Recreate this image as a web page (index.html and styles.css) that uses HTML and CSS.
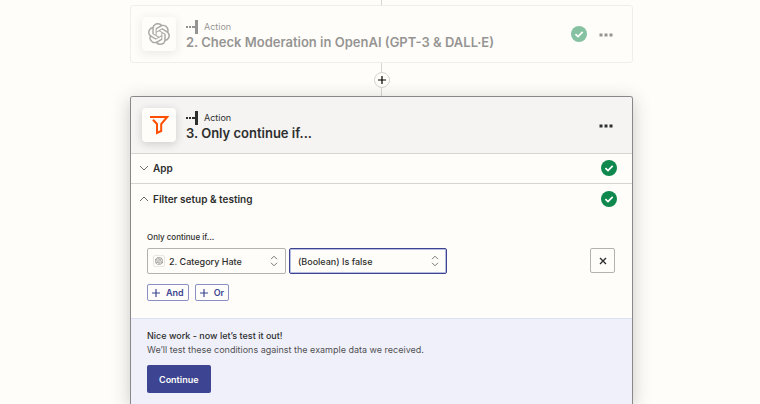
FILE: index.html
```html
<!DOCTYPE html>
<html lang="en">
<head>
    <meta charset="utf-8">
    <title>Workflow editor</title>
    <meta name="viewport" content="width=device-width, initial-scale=1">
    <link rel="stylesheet" href="styles.css">
</head>
<body>
    <!-- shared icons -->
    <svg class="sprite" aria-hidden="true">
        <symbol id="icon-openai" viewBox="0 0 24 24">
            <path fill="currentColor" d="M22.2819 9.8211a5.9847 5.9847 0 0 0-.5157-4.9108 6.0462 6.0462 0 0 0-6.5098-2.9A6.0651 6.0651 0 0 0 4.9807 4.1818a5.9847 5.9847 0 0 0-3.9977 2.9 6.0462 6.0462 0 0 0 .7427 7.0966 5.98 5.98 0 0 0 .511 4.9107 6.051 6.051 0 0 0 6.5146 2.9001A5.9847 5.9847 0 0 0 13.2599 24a6.0557 6.0557 0 0 0 5.7718-4.2058 5.9894 5.9894 0 0 0 3.9977-2.9001 6.0557 6.0557 0 0 0-.7475-7.0729zm-9.022 12.6081a4.4755 4.4755 0 0 1-2.8764-1.0408l.1419-.0804 4.7783-2.7582a.7948.7948 0 0 0 .3927-.6813v-6.7369l2.02 1.1686a.071.071 0 0 1 .038.052v5.5826a4.504 4.504 0 0 1-4.4945 4.4944zm-9.6607-4.1254a4.4708 4.4708 0 0 1-.5346-3.0137l.142.0852 4.783 2.7582a.7712.7712 0 0 0 .7806 0l5.8428-3.3685v2.3324a.0804.0804 0 0 1-.0332.0615L9.74 19.9502a4.4992 4.4992 0 0 1-6.1408-1.6464zM2.3408 7.8956a4.485 4.485 0 0 1 2.3655-1.9728V11.6a.7664.7664 0 0 0 .3879.6765l5.8144 3.3543-2.0201 1.1685a.0757.0757 0 0 1-.071 0l-4.8303-2.7865A4.504 4.504 0 0 1 2.3408 7.872zm16.5963 3.8558L13.1038 8.364 15.1192 7.2a.0757.0757 0 0 1 .071 0l4.8303 2.7913a4.4944 4.4944 0 0 1-.6765 8.1042v-5.6772a.79.79 0 0 0-.407-.667zm2.0107-3.0231l-.142-.0852-4.7735-2.7818a.7759.7759 0 0 0-.7854 0L9.409 9.2297V6.8974a.0662.0662 0 0 1 .0284-.0615l4.8303-2.7866a4.4992 4.4992 0 0 1 6.6802 4.66zM8.3065 12.863l-2.02-1.1638a.0804.0804 0 0 1-.038-.0567V6.0742a4.4992 4.4992 0 0 1 7.3757-3.4537l-.142.0805L8.704 5.459a.7948.7948 0 0 0-.3927.6813zm1.0976-2.3654l2.602-1.4998 2.6069 1.4998v2.9994l-2.5974 1.4997-2.6067-1.4997Z"/>
        </symbol>
        <symbol id="icon-action" viewBox="0 0 12 14">
            <path fill="currentColor" d="M0 6h2v2H0zM3 6h2v2H3zM6 6h4v2H6zM9 0h3v14H9z"/>
        </symbol>
        <symbol id="icon-check" viewBox="0 0 16 16">
            <circle cx="8" cy="8" r="8" fill="#0f884e"/>
            <path fill="none" stroke="#fff" stroke-width="1.7" d="M4.4 8.1 7 10.6l4.7-4.8"/>
        </symbol>
        <symbol id="icon-more" viewBox="0 0 14 4">
            <path fill="currentColor" d="M.5.5h3v3h-3zM5.5.5h3v3h-3zM10.5.5h3v3h-3z"/>
        </symbol>
        <symbol id="icon-sort" viewBox="0 0 8 12">
            <path fill="none" stroke="currentColor" d="M1 4.2 4 1.2l3 3M1 7.8l3 3 3-3"/>
        </symbol>
        <symbol id="icon-plus" viewBox="0 0 8 8">
            <path fill="none" stroke="currentColor" stroke-width="1.2" d="M4 0v8M0 4h8"/>
        </symbol>
    </svg>

    <main class="workflow">
        <div class="connector connector-top"></div>

        <section class="step step-faded">
            <header class="step-header">
                <span class="app-icon"><svg class="openai-logo"><use href="#icon-openai"/></svg></span>
                <div class="step-name">
                    <p class="step-type"><svg class="action-icon"><use href="#icon-action"/></svg>Action</p>
                    <h2 class="step-title">2. Check Moderation in OpenAI (GPT-3 &amp; DALL·E)</h2>
                </div>
                <svg class="check"><use href="#icon-check"/></svg>
                <button class="more" type="button" aria-label="More"><svg class="more-icon"><use href="#icon-more"/></svg></button>
            </header>
        </section>

        <div class="connector">
            <button class="add-step" type="button" aria-label="Add step"><svg class="plus-icon"><use href="#icon-plus"/></svg></button>
        </div>

        <section class="step step-open">
            <header class="step-header">
                <span class="app-icon">
                    <svg class="filter-logo" viewBox="0 0 20 20">
                        <path fill="none" stroke="#ff4f00" stroke-width="2" d="M1 2h17.2L12.200 9v7L8 18V9L4 4.800"/>
                    </svg>
                </span>
                <div class="step-name">
                    <p class="step-type"><svg class="action-icon"><use href="#icon-action"/></svg>Action</p>
                    <h2 class="step-title">3. Only continue if...</h2>
                </div>
                <button class="more" type="button" aria-label="More"><svg class="more-icon"><use href="#icon-more"/></svg></button>
            </header>

            <button class="section-row" type="button">
                <svg class="chevron" viewBox="0 0 10 6"><path d="M1 1l4 4 4-4"/></svg>
                <span class="section-name">App</span>
                <svg class="check"><use href="#icon-check"/></svg>
            </button>
            <button class="section-row" type="button">
                <svg class="chevron" viewBox="0 0 10 6"><path d="M1 5l4-4 4 4"/></svg>
                <span class="section-name">Filter setup &amp; testing</span>
                <svg class="check"><use href="#icon-check"/></svg>
            </button>

            <div class="rules">
                <label class="rules-label" for="field">Only continue if...</label>
                <div class="rule">
                    <div class="dropdown dropdown-field">
                        <span class="field-icon"><svg class="field-logo"><use href="#icon-openai"/></svg></span>
                        <select class="dropdown-select" id="field">
                            <option>2. Category Hate</option>
                        </select>
                        <svg class="sort-icon"><use href="#icon-sort"/></svg>
                    </div>
                    <div class="dropdown dropdown-active">
                        <select class="dropdown-select" id="condition" aria-label="Condition">
                            <option>(Boolean) Is false</option>
                        </select>
                        <svg class="sort-icon"><use href="#icon-sort"/></svg>
                    </div>
                    <button class="remove" type="button" aria-label="Remove">
                        <svg class="remove-icon" viewBox="0 0 8 8"><path d="M1 1l6 6M7 1L1 7"/></svg>
                    </button>
                </div>
                <div class="rule-buttons">
                    <button class="add-rule" type="button"><svg class="plus-icon"><use href="#icon-plus"/></svg>And</button>
                    <button class="add-rule" type="button"><svg class="plus-icon"><use href="#icon-plus"/></svg>Or</button>
                </div>
            </div>

            <div class="test-panel">
                <p class="test-title">Nice work - now let’s test it out!</p>
                <p class="test-text">We’ll test these conditions against the example data we received.</p>
                <button class="continue" type="button">Continue</button>
            </div>
        </section>
    </main>
</body>
</html>
```
FILE: styles.css
```css
* {
    box-sizing: border-box;
}

body {
    margin: 0;
    background-color: #fffdf9;
    color: #2d2e2e;
    font-family: Inter, "Liberation Sans", sans-serif;
    font-size: 9px;
}

button,
select {
    margin: 0;
    padding: 0;
    border: none;
    background: none;
    color: inherit;
    font: inherit;
    cursor: pointer;
}

svg {
    display: block;
    flex-shrink: 0;
}

p,
h2 {
    margin: 0;
}

.sprite {
    position: absolute;
    width: 0;
    height: 0;
}

.workflow {
    display: flex;
    flex-direction: column;
    max-width: 506px;
    min-height: 100vh;
    margin: 0 auto;
    padding-left: 3px;
}

/* lines between the steps */
.connector {
    display: flex;
    align-items: center;
    justify-content: center;
    height: 33px;
    background: linear-gradient(#d7d5d2, #d7d5d2) center / 1px 100% no-repeat;
}

.connector-top {
    height: 5px;
}

.add-step {
    display: flex;
    align-items: center;
    justify-content: center;
    width: 16px;
    height: 16px;
    border: 1px solid #d7d5d2;
    border-radius: 50%;
    background-color: #fffdf9;
    color: #000;
}

.plus-icon {
    width: 8px;
    height: 8px;
}

/* steps */
.step {
    border: 1px solid #e3e1de;
    border-radius: 3px;
    background-color: #fffdf9;
}

.step-faded {
    opacity: 0.5;
}

.step-open {
    display: flex;
    flex: 1;
    flex-direction: column;
    border-color: #88888a;
    border-bottom: none;
    border-radius: 3px 3px 0 0;
    box-shadow: 0 4px 18px rgba(45, 46, 46, 0.25);
}

.step-header {
    display: flex;
    align-items: center;
    height: 56px;
    padding: 0 19px 0 11px;
}

.step-open .step-header {
    height: 57px;
    border-bottom: 1px solid #d7d5d2;
    border-radius: 2px 2px 0 0;
    background-color: #f5f4f2;
}

.app-icon {
    display: flex;
    align-items: center;
    justify-content: center;
    width: 34px;
    height: 34px;
    border-radius: 4px;
    background-color: #fffdf9;
    box-shadow: 0 2px 8px rgba(45, 46, 46, 0.2);
}

.openai-logo {
    width: 22px;
    height: 22px;
    color: #555;
}

.filter-logo {
    width: 20px;
    height: 20px;
}

.step-name {
    flex: 1;
    padding: 2px 0 0 10px;
}

.step-type {
    display: flex;
    align-items: center;
    gap: 6px;
    line-height: 14px;
}

.action-icon {
    width: 12px;
    height: 14px;
}

.step-title {
    font-size: 13px;
    font-weight: 600;
    line-height: 16px;
}

.more {
    margin-left: 12px;
    padding-top: 2px;
}

.more-icon {
    width: 14px;
    height: 4px;
}

.check {
    width: 16px;
    height: 16px;
}

/* section rows */
.section-row {
    display: flex;
    align-items: center;
    height: 30px;
    padding: 0 15px 1px 8px;
    border-bottom: 1px solid #d7d5d2;
    text-align: left;
}

.section-row + .section-row {
    border-bottom: none;
}

.section-name {
    flex: 1;
    padding-left: 4px;
    font-size: 10px;
    font-weight: 600;
}

.chevron {
    width: 10px;
    height: 6px;
    fill: none;
    stroke: #6b6b6b;
}

/* filter rules */
.rules {
    padding: 15px 17px 17px 16px;
}

.rules-label {
    display: block;
    font-size: 8px;
    font-weight: 500;
    line-height: 16px;
}

.rule {
    display: flex;
    gap: 3px;
    margin-top: 3px;
}

.dropdown {
    display: flex;
    align-items: center;
    width: 158px;
    height: 26px;
    border: 1px solid #b5b2ae;
    border-radius: 2px;
    padding: 0 7px 0 8px;
    font-weight: 500;
}

.dropdown-field {
    width: 139px;
    padding-left: 5px;
}

.dropdown-active {
    border-color: #3d4592;
    box-shadow: inset 0 0 0 1px #b8bbe0;
}

.dropdown-select {
    flex: 1;
    min-width: 0;
    height: 24px;
    appearance: none;
    outline: none;
}

.field-icon {
    display: flex;
    align-items: center;
    justify-content: center;
    width: 12px;
    height: 12px;
    margin-right: 4px;
    border: 1px solid #e8e7e4;
    border-radius: 2px;
}

.field-logo {
    width: 8px;
    height: 8px;
    color: #777;
}

.sort-icon {
    width: 8px;
    height: 12px;
    color: #777;
}

.remove {
    display: flex;
    align-items: center;
    justify-content: center;
    width: 25px;
    height: 25px;
    margin-left: auto;
    border: 1px solid #b5b2ae;
    border-radius: 2px;
}

.remove-icon {
    width: 8px;
    height: 8px;
    fill: none;
    stroke: #2d2e2e;
    stroke-width: 1.4;
}

.rule-buttons {
    display: flex;
    gap: 6px;
    margin-top: 10px;
}

.add-rule {
    display: flex;
    align-items: center;
    gap: 6px;
    height: 17px;
    padding: 0 4px;
    border: 1px solid #8a8fc4;
    border-radius: 2px;
    color: #3d4592;
    font-weight: 600;
}

/* test panel */
.test-panel {
    flex: 1;
    padding: 10px 16px;
    border-top: 1px solid #dcdff5;
    background-color: #f0f0fb;
}

.test-title,
.test-text {
    line-height: 14px;
}

.test-title {
    font-weight: 500;
}

.test-text {
    color: #505152;
}

.continue {
    height: 28px;
    margin-top: 8px;
    padding: 0 12px;
    border-radius: 2px;
    background-color: #3d4592;
    color: #fffdf9;
    font-weight: 600;
}
```
